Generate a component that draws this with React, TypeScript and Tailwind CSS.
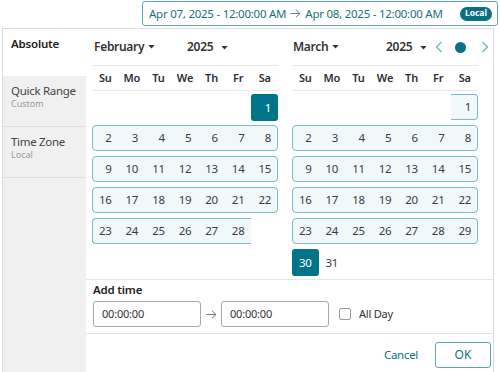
import React from 'react'

const teal = 'text-[#0f6f80]'

const Caret = () => (
  <svg width="7" height="4" viewBox="0 0 8 5" className="ml-[4px] inline-block">
    <path d="M0 0 L8 0 L4 4.5 Z" fill="#333" />
  </svg>
)

const Arrow = ({ color }: { color: string }) => (
  <svg width="11" height="9" viewBox="0 0 11 9">
    <path d="M0.5 4.5 H10 M6 0.8 L10 4.5 L6 8.2" fill="none" stroke={color} strokeWidth="1" />
  </svg>
)

const days = ['Su', 'Mo', 'Tu', 'We', 'Th', 'Fr', 'Sa']

// one week row, with the highlighted range and the selected cell
type Row = {
  cells: (number | null)[];
  range?: { from: number; to: number; openLeft?: boolean; openRight?: boolean };
  selected?: number;
}

const febRows: Row[] = [
  { cells: [null, null, null, null, null, null, 1], selected: 6 },
  { cells: [2, 3, 4, 5, 6, 7, 8], range: { from: 0, to: 6 } },
  { cells: [9, 10, 11, 12, 13, 14, 15], range: { from: 0, to: 6 } },
  { cells: [16, 17, 18, 19, 20, 21, 22], range: { from: 0, to: 6 } },
  { cells: [23, 24, 25, 26, 27, 28, null], range: { from: 0, to: 5, openRight: true } },
]

const marRows: Row[] = [
  { cells: [null, null, null, null, null, null, 1], range: { from: 6, to: 6, openLeft: true } },
  { cells: [2, 3, 4, 5, 6, 7, 8], range: { from: 0, to: 6 } },
  { cells: [9, 10, 11, 12, 13, 14, 15], range: { from: 0, to: 6 } },
  { cells: [16, 17, 18, 19, 20, 21, 22], range: { from: 0, to: 6 } },
  { cells: [23, 24, 25, 26, 27, 28, 29], range: { from: 0, to: 6 } },
  { cells: [30, 31, null, null, null, null, null], selected: 0 },
]

const CW = 186 / 7

const WeekRow: React.FC<{ row: Row }> = ({ row }) => {
  const r = row.range
  return (
    <div className="relative h-[26px] w-[186px]">
      {r && (
        <div
          className={
            'absolute top-0 h-[26px] bg-[#f0f8fa] border-y border-[#7cbcc8] ' +
            (r.openLeft ? '' : 'border-l rounded-l-[4px] ') +
            (r.openRight ? '' : 'border-r rounded-r-[4px]')
          }
          style={{ left: r.from * CW, width: (r.to - r.from + 1) * CW }}
        />
      )}
      <div className="relative grid grid-cols-7 h-full">
        {row.cells.map((d, i) =>
          d === null ? (
            <div key={i} />
          ) : row.selected === i ? (
            <div key={i} className="flex items-center justify-end pr-[7px] h-[27px] bg-[#00758a] text-white rounded-[3px]">
              {d}
            </div>
          ) : (
            <div key={i} className="flex items-center justify-end pr-[7px] text-[#3b3b45]">
              {d}
            </div>
          )
        )}
      </div>
    </div>
  )
}

const Calendar: React.FC<{ rows: Row[]; header: React.ReactNode }> = ({ rows, header }) => (
  <div className="w-[186px]">
    <div className="h-[37px] border-b border-[#e9e9e9] flex items-center">{header}</div>
    <div className="h-[25px] border-b border-[#e9e9e9] grid grid-cols-7 items-center text-[11px] font-semibold text-[#2d2d38] tracking-[-0.2px]">
      {days.map(d => (
        <div key={d} className="text-center">{d}</div>
      ))}
    </div>
    <div className="pt-[3px] flex flex-col gap-[5px] text-[11.5px] tracking-[-0.3px]">
      {rows.map((r, i) => (
        <WeekRow key={i} row={r} />
      ))}
    </div>
  </div>
)

export default function App() {
  return (
    <div className="w-[500px] h-[372px] bg-white overflow-hidden text-[#333] font-['Noto_Sans',sans-serif]">
      <div className="flex justify-end pt-[1px] pr-[2px]">
        <div className="w-[356px] h-[25px] border border-[#5fa6b4] rounded-[3px] flex items-center pl-[6px] pr-[5px] text-[11.5px] tracking-[-0.25px] text-[#1d6e7e] whitespace-nowrap">
          <span>Apr 07, 2025 - 12:00:00 AM</span>
          <span className="mx-[4px] flex items-center"><Arrow color="#6a7f86" /></span>
          <span>Apr 08, 2025 - 12:00:00 AM</span>
          <span className="ml-auto h-[14px] px-[5px] rounded-full bg-[#0b6f83] text-white text-[8.5px] tracking-normal font-bold flex items-center">Local</span>
        </div>
      </div>

      <div className="ml-[2px] mt-[2px] w-[492px] h-[350px] border border-[#dcdcdc] flex">
        <div className="w-[83px] bg-[#f0f0f0] flex flex-col">
          <div className="h-[47px] bg-white pl-[8px] pt-[6px] text-[11.5px] tracking-[-0.2px] font-semibold text-[#222]">Absolute</div>
          <div className="h-[51px] border-b border-[#dedede] pl-[8px] pt-[8px] leading-tight">
            <div className="text-[11.5px] tracking-[-0.3px] text-[#444]">Quick Range</div>
            <div className="text-[9px] text-[#9a9a9a]">Custom</div>
          </div>
          <div className="h-[51px] border-b border-[#dedede] pl-[8px] pt-[8px] leading-tight">
            <div className="text-[11.5px] tracking-[-0.3px] text-[#444]">Time Zone</div>
            <div className="text-[9px] text-[#9a9a9a]">Local</div>
          </div>
        </div>

        <div className="flex-1 flex flex-col">
          <div className="h-[250px] flex gap-[14px] pl-[6px]">
            <Calendar
              rows={febRows}
              header={
                <div className="flex items-center text-[12px] tracking-[-0.3px] font-semibold text-[#333] pl-[2px]">
                  <span className="w-[93px] flex items-center">February<Caret /></span>
                  <span className="flex items-center">2025<span className="ml-[4px]"><Caret /></span></span>
                </div>
              }
            />
            <Calendar
              rows={marRows}
              header={
                <div className="flex items-center text-[12px] tracking-[-0.3px] font-semibold text-[#333] pl-[1px] whitespace-nowrap">
                  <span className="w-[93px] flex items-center">March<Caret /></span>
                  <span className="w-[46px] flex items-center">2025<span className="ml-[4px]"><Caret /></span></span>
                  <svg width="8" height="12" viewBox="0 0 8 12" className="ml-[3px]">
                    <path d="M6.5 1 L1.5 6 L6.5 11" fill="none" stroke="#6db6c4" strokeWidth="1.3" />
                  </svg>
                  <span className="ml-[12px] w-[11px] h-[11px] rounded-full bg-[#0a7189]" />
                  <svg width="8" height="12" viewBox="0 0 8 12" className="ml-[15px]">
                    <path d="M1.5 1 L6.5 6 L1.5 11" fill="none" stroke="#6db6c4" strokeWidth="1.3" />
                  </svg>
                </div>
              }
            />
          </div>

          <div className="border-t border-[#e6e6e6] pl-[7px] pt-[1px] pb-[6px]">
            <div className="text-[11.5px] tracking-[-0.2px] font-semibold text-[#222] leading-[18px]">Add time</div>
            <div className="mt-[2px] flex items-center">
              <div className="w-[108px] h-[26px] border border-[#a9a9a9] rounded-[3px] flex items-center pl-[8px] text-[11px] tracking-[-0.2px] text-[#333]">00:00:00</div>
              <span className="w-[20px] flex justify-center items-center"><Arrow color="#777" /></span>
              <div className="w-[108px] h-[26px] border border-[#a9a9a9] rounded-[3px] flex items-center pl-[8px] text-[11px] tracking-[-0.2px] text-[#333]">00:00:00</div>
              <span className="ml-[10px] w-[12px] h-[12px] border border-[#9a9a9a] rounded-[2px] bg-white" />
              <span className="ml-[8px] text-[11px] tracking-[-0.2px] text-[#333]">All Day</span>
            </div>
          </div>

          <div className="border-t border-[#e6e6e6] flex items-center justify-end pt-[8px] pr-[2px]">
            <span className={'text-[11.5px] tracking-[-0.3px] ' + teal + ' mr-[17px]'}>Cancel</span>
            <div className={'w-[56px] h-[26px] border border-[#5fa6b4] rounded-[3px] flex items-center justify-center text-[12px] ' + teal}>OK</div>
          </div>
        </div>
      </div>
    </div>
  )
}
